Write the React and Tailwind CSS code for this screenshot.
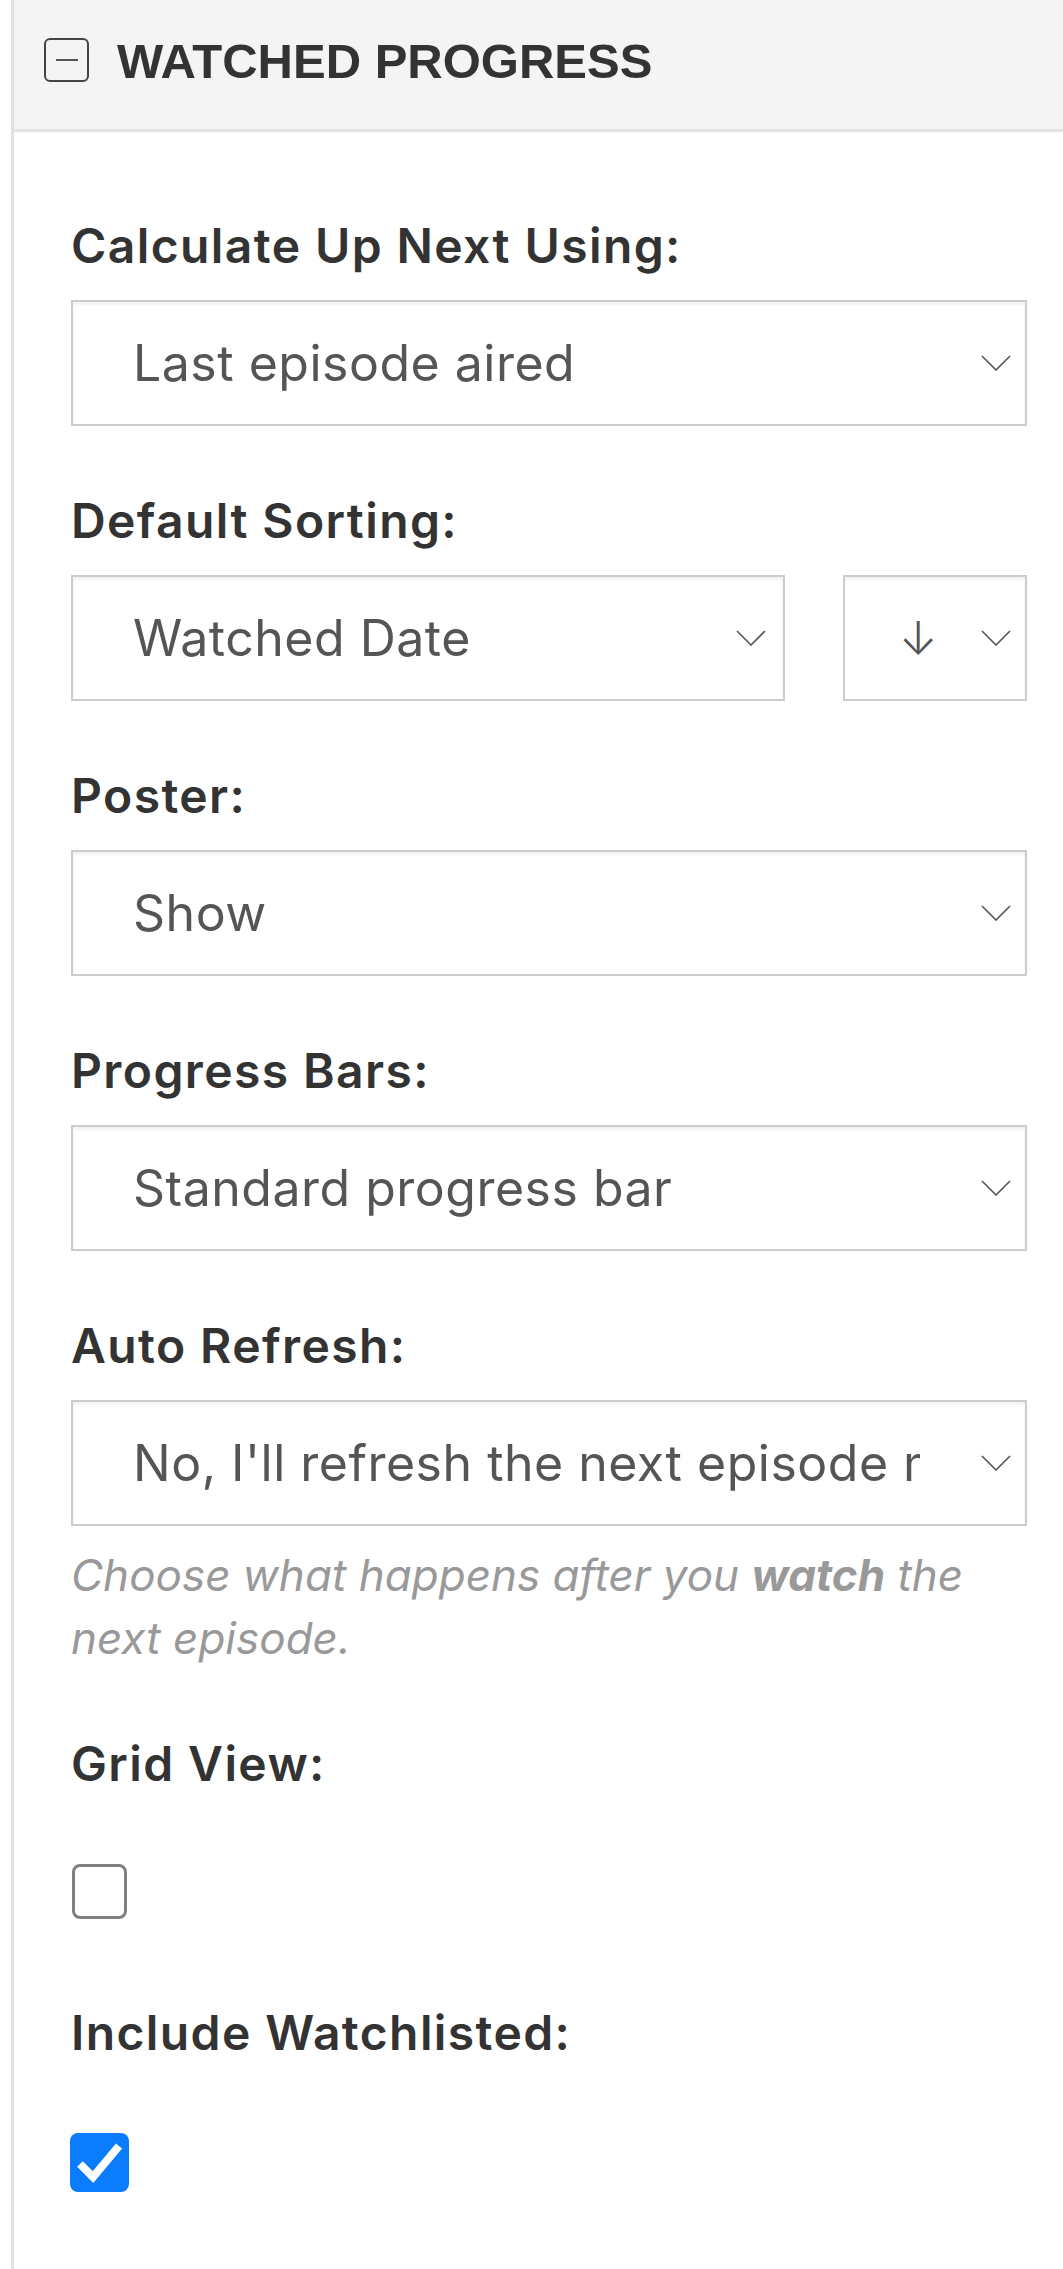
import React from "react";

const Chevron = () => (
  <svg width="30" height="16" viewBox="0 0 30 16" fill="none" stroke="#555555" strokeWidth="1.6">
    <path d="M1 1l14 14L29 1" />
  </svg>
);

function Select({ value, arrowPad = "pr-[14px]" }) {
  return (
    <div className="flex h-[126px] items-center border-2 border-[#cccccc] bg-white shadow-[inset_0_3px_3px_rgba(0,0,0,0.05)]">
      <div className="min-w-0 flex-1 overflow-hidden whitespace-nowrap pl-[60px] text-[50px] leading-[60px] tracking-[0.5px] text-[#555555]">
        {value}
      </div>
      <div className={`flex w-[105px] shrink-0 justify-end ${arrowPad}`}>
        <Chevron />
      </div>
    </div>
  );
}

function Label({ children }) {
  return (
    <div className="mb-[24px] h-[60px] text-[48px] font-semibold leading-[60px] tracking-[1.4px] text-[#333333]">
      {children}
    </div>
  );
}

export default function App() {
  return (
    <div className="min-h-screen bg-white pl-[11px]" style={{ fontFamily: "Inter, 'Noto Sans', sans-serif" }}>
      <div className="min-h-[2269px] border-l-[3px] border-[#e2e2e2]">
        {/* cabecera */}
        <div className="flex h-[132px] items-start gap-[28px] border-b-[3px] border-[#e3e3e3] bg-[#f4f4f4] pl-[30px] pt-[37px]">
          <div className="mt-px flex h-[44px] w-[45px] items-center justify-center rounded-[6px] border-2 border-[#444444]">
            <div className="h-[2px] w-[22px] bg-[#555555]" />
          </div>
          <h2
            className="text-[49px] font-bold leading-[49px] text-[#333333]"
            style={{ fontFamily: "'Liberation Sans', Arial, sans-serif" }}
          >
            WATCHED PROGRESS
          </h2>
        </div>

        <div className="pl-[57px] pr-[36px] pt-[84px]">
          <div className="mb-[65px]">
            <Label>Calculate Up Next Using:</Label>
            <Select value="Last episode aired" />
          </div>

          <div className="mb-[65px]">
            <Label>Default Sorting:</Label>
            <div className="flex gap-[58px]">
              <div className="flex-1">
                <Select value="Watched Date" arrowPad="pr-[17px]" />
              </div>
              <div className="flex h-[126px] w-[184px] items-center border-2 border-[#cccccc] bg-white pl-[54px] pr-[14px] shadow-[inset_0_3px_3px_rgba(0,0,0,0.05)]">
                <span className="text-[46px] font-light leading-[60px] text-[#555555]">↓</span>
                <div className="flex-1" />
                <Chevron />
              </div>
            </div>
          </div>

          <div className="mb-[65px]">
            <Label>Poster:</Label>
            <Select value="Show" />
          </div>

          <div className="mb-[65px]">
            <Label>Progress Bars:</Label>
            <Select value="Standard progress bar" />
          </div>

          <div>
            <Label>Auto Refresh:</Label>
            <Select value="No, I'll refresh the next episode myself" />
            <p className="mt-[18px] text-[44px] italic leading-[63px] text-[#999999]">
              Choose what happens after you <b className="font-bold">watch</b> the next episode.
            </p>
          </div>

          <div className="mt-[64px]">
            <div className="h-[60px] text-[48px] font-semibold leading-[60px] tracking-[1.4px] text-[#333333]">Grid View:</div>
            <div className="ml-px mt-[70px] h-[55px] w-[55px] rounded-[8px] border-[3px] border-[#808080] bg-white" />
          </div>

          <div className="mt-[84px]">
            <div className="h-[60px] text-[48px] font-semibold leading-[60px] tracking-[1.4px] text-[#333333]">Include Watchlisted:</div>
            <div className="-ml-px mt-[70px] flex h-[59px] w-[59px] items-center justify-center rounded-[8px] bg-[#0b7cfb]">
              <svg width="59" height="59" viewBox="0 0 59 59" fill="none" stroke="#ffffff" strokeWidth="8">
                <path d="M10 31l13 13L49 13" />
              </svg>
            </div>
          </div>
        </div>
      </div>
    </div>
  );
}
